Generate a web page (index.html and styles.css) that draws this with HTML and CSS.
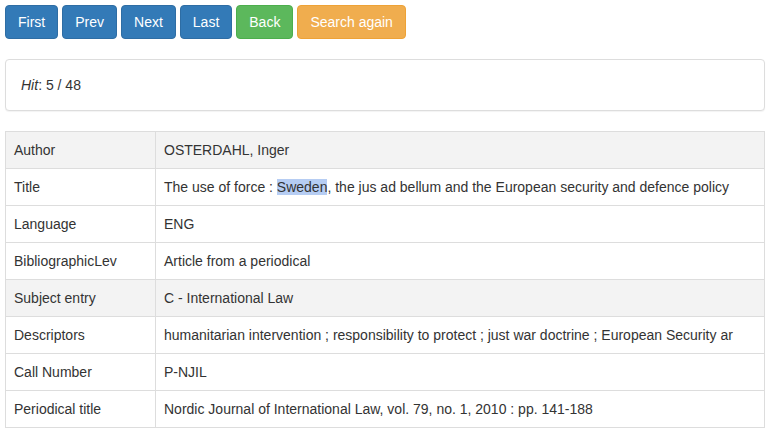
FILE: index.html
```html
<!DOCTYPE html>
<html>
<head>
<meta charset="utf-8">
<link rel="stylesheet" href="styles.css">
</head>
<body>
<div class="page">
  <div class="toolbar">
    <a class="btn btn-primary">First</a>
    <a class="btn btn-primary">Prev</a>
    <a class="btn btn-primary">Next</a>
    <a class="btn btn-primary">Last</a>
    <a class="btn btn-success">Back</a>
    <a class="btn btn-warning">Search again</a>
  </div>
  <div class="panel">
    <div class="panel-body"><em>Hit</em>: 5 / 48</div>
  </div>
  <table class="record">
    <colgroup><col class="col-label"><col></colgroup>
    <tr class="shade"><td>Author</td><td>OSTERDAHL, Inger</td></tr>
    <tr><td>Title</td><td>The use of force : <span class="hl">Sweden</span>, the jus ad bellum and the European security and defence policy</td></tr>
    <tr><td>Language</td><td>ENG</td></tr>
    <tr><td>BibliographicLev</td><td>Article from a periodical</td></tr>
    <tr class="shade"><td>Subject entry</td><td>C - International Law</td></tr>
    <tr><td>Descriptors</td><td>humanitarian intervention ; responsibility to protect ; just war doctrine ; European Security ar</td></tr>
    <tr><td>Call Number</td><td>P-NJIL</td></tr>
    <tr><td>Periodical title</td><td>Nordic Journal of International Law, vol. 79, no. 1, 2010 : pp. 141-188</td></tr>
  </table>
</div>
</body>
</html>
```

FILE: styles.css
```css
* { box-sizing: border-box; }
html, body { margin: 0; padding: 0; background: #fff; }
body {
  font-family: "Liberation Sans", Arial, sans-serif;
  font-size: 14px;
  line-height: 20px;
  color: #333;
}
.page { padding: 5px; }
.toolbar {
  display: flex;
  gap: 4px;
  margin-bottom: 20px;
}
.btn {
  display: inline-block;
  padding: 6px 12px;
  font-size: 14px;
  line-height: 20px;
  border: 1px solid transparent;
  border-radius: 4px;
  color: #fff;
  text-decoration: none;
  white-space: nowrap;
}
.btn-primary { background: #337ab7; border-color: #2e6da4; }
.btn-success { background: #5cb85c; border-color: #4cae4c; }
.btn-warning { background: #f0ad4e; border-color: #eea236; }
.panel {
  border: 1px solid #ddd;
  border-radius: 4px;
  background: #fff;
  box-shadow: 0 1px 1px rgba(0,0,0,0.05);
  margin-bottom: 20px;
}
.panel-body { padding: 15px; }
.record {
  width: 100%;
  border-collapse: collapse;
  border: 1px solid #ddd;
}
.col-label { width: 150px; }
.record td {
  border: 1px solid #ddd;
  padding: 8px;
  line-height: 20px;
  vertical-align: top;
  white-space: nowrap;
}
.record tr.shade td { background: #f3f3f3; }
.hl { background: #b6cdf3; }
```
